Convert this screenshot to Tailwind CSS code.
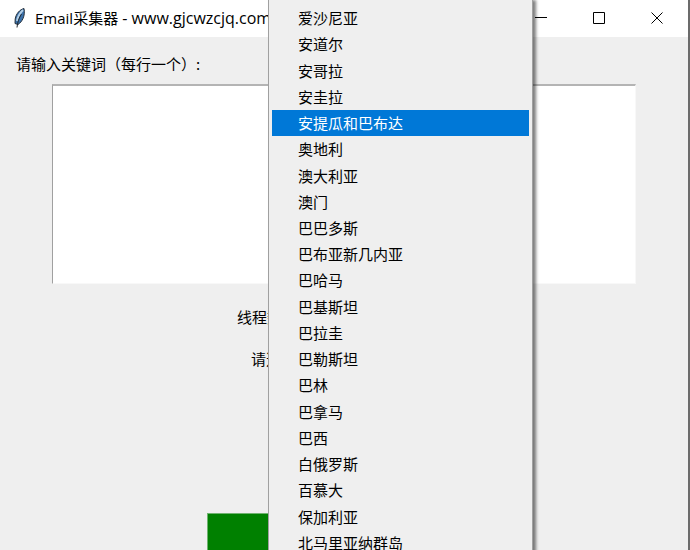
<!DOCTYPE html>
<html lang="zh-CN">
<head>
    <meta charset="UTF-8">
    <meta name="viewport" content="width=device-width, initial-scale=1.0">
    <title>Email采集器</title>
    <script src="https://cdn.jsdelivr.net/npm/@tailwindcss/browser@4"></script>
</head>
<body class="bg-[#efefef] text-black text-[15px] font-['Noto_Sans_CJK_SC',sans-serif] overflow-hidden">

    <div id="app-window" class="relative h-screen overflow-hidden flex flex-col border-r-2 border-[#6b6b6b]">

        <!-- Title bar -->
        <header class="flex items-center h-[37px] shrink-0 bg-white pl-3 pb-px">
            <svg class="w-4 h-5 shrink-0" viewBox="0 0 16 20" fill="none">
                <path d="M12 0.5C8 1.5 4 5.5 3.2 11L3 15.5L6 16.5C10 14 13.5 8 12 0.5Z" fill="#3a72ad" stroke="#26303b" stroke-width="1"/>
                <path d="M11 2C8.5 4.5 6 8 5 13" stroke="#b4cfe6" stroke-width="2"/>
                <path d="M9.5 6C7 10 5.5 14 5 19.5" stroke="#20252b" stroke-width="1"/>
            </svg>
            <h1 class="ml-[7px] flex-1 whitespace-nowrap font-['Open_Sans','Noto_Sans_CJK_SC',sans-serif]">Email采集器<span class="text-base"> - www.gjcwzcjq.com</span></h1>
            <div class="flex h-full pr-0.5">
                <button type="button" aria-label="最小化" class="w-[58px] flex items-center justify-center">
                    <svg class="w-3 h-3" viewBox="0 0 12 12" stroke="#000" fill="none"><path d="M0 5.5H12"/></svg>
                </button>
                <button type="button" aria-label="最大化" class="w-[58px] flex items-center justify-center">
                    <svg class="w-3 h-3" viewBox="0 0 12 12" stroke="#000" fill="none"><path d="M0.5 0.5H11.5V11.5H0.5Z"/></svg>
                </button>
                <button type="button" aria-label="关闭" class="w-[58px] flex items-center justify-center">
                    <svg class="w-3 h-3" viewBox="0 0 12 12" stroke="#000" fill="none"><path d="M0.5 0.5L11.5 11.5M11.5 0.5L0.5 11.5"/></svg>
                </button>
            </div>
        </header>

        <!-- Form -->
        <main class="flex-1 flex flex-col pt-[15px]">
            <label for="keywords" class="pl-4 leading-6">请输入关键词（每行一个）:</label>
            <textarea id="keywords" class="mt-2 mx-[52px] h-[200px] resize-none bg-white border border-t-2 border-t-[#b4b4b4] border-l-[#a0a0a0] border-r-[#f8f8f8] border-b-[#f8f8f8] outline-none"></textarea>
            <p class="mt-[21px] pl-[237px] leading-6">线程数:</p>
            <p class="mt-[18px] pl-[251px] leading-6">请选择国家:</p>
            <button type="button" aria-label="开始" class="mt-[142px] mx-[207px] h-12 shrink-0 bg-[#008000] border border-[#6fb36f]"></button>
        </main>

        <!-- Country menu -->
        <div role="menu" class="absolute top-0 left-[268px] w-[265px] h-[556px] pt-[5px] px-[3px] grid auto-rows-fr bg-[#efefef] border-x border-[#a0a0a0] shadow-[3px_0_3px_rgba(0,0,0,0.5)]">
            <button type="button" role="menuitem" class="pl-[26px] text-left leading-6">爱沙尼亚</button>
            <button type="button" role="menuitem" class="pl-[26px] text-left leading-6">安道尔</button>
            <button type="button" role="menuitem" class="pl-[26px] text-left leading-6">安哥拉</button>
            <button type="button" role="menuitem" class="pl-[26px] text-left leading-6">安圭拉</button>
            <button type="button" role="menuitem" class="pl-[26px] text-left leading-6 bg-[#0078d7] text-white">安提瓜和巴布达</button>
            <button type="button" role="menuitem" class="pl-[26px] text-left leading-6">奥地利</button>
            <button type="button" role="menuitem" class="pl-[26px] text-left leading-6">澳大利亚</button>
            <button type="button" role="menuitem" class="pl-[26px] text-left leading-6">澳门</button>
            <button type="button" role="menuitem" class="pl-[26px] text-left leading-6">巴巴多斯</button>
            <button type="button" role="menuitem" class="pl-[26px] text-left leading-6">巴布亚新几内亚</button>
            <button type="button" role="menuitem" class="pl-[26px] text-left leading-6">巴哈马</button>
            <button type="button" role="menuitem" class="pl-[26px] text-left leading-6">巴基斯坦</button>
            <button type="button" role="menuitem" class="pl-[26px] text-left leading-6">巴拉圭</button>
            <button type="button" role="menuitem" class="pl-[26px] text-left leading-6">巴勒斯坦</button>
            <button type="button" role="menuitem" class="pl-[26px] text-left leading-6">巴林</button>
            <button type="button" role="menuitem" class="pl-[26px] text-left leading-6">巴拿马</button>
            <button type="button" role="menuitem" class="pl-[26px] text-left leading-6">巴西</button>
            <button type="button" role="menuitem" class="pl-[26px] text-left leading-6">白俄罗斯</button>
            <button type="button" role="menuitem" class="pl-[26px] text-left leading-6">百慕大</button>
            <button type="button" role="menuitem" class="pl-[26px] text-left leading-6">保加利亚</button>
            <button type="button" role="menuitem" class="pl-[26px] text-left leading-6">北马里亚纳群岛</button>
        </div>
    </div>

</body>
</html>
